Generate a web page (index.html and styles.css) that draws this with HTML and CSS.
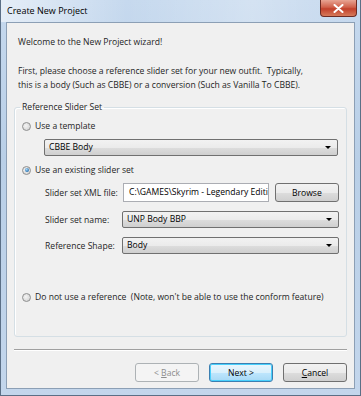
FILE: index.html
```html
<!DOCTYPE html>
<html lang="en">
<head>
  <meta charset="UTF-8" />
  <title>Create New Project</title>
  <link rel="stylesheet" href="styles.css">
</head>
<body>

  <div class="window">
    <div class="titlebar">
      <span class="title">Create New Project</span>
      <div class="close">
        <svg width="11" height="9" viewBox="0 0 11 9">
          <path d="M1.5 1 L9.5 8 M9.5 1 L1.5 8" stroke="#fff" stroke-width="2" stroke-linecap="round"/>
        </svg>
      </div>
    </div>

    <div class="client">
      <div class="intro">
        <p class="welcome">Welcome to the New Project wizard!</p>
        <p class="lead">First, please choose a reference slider set for your new outfit.&nbsp; Typically,<br>this is a body (Such as CBBE) or a conversion (Such as Vanilla To CBBE).</p>
      </div>

      <fieldset class="group">
        <legend>Reference Slider Set</legend>

        <label class="radio r1"><span class="dot"></span>Use a template</label>
        <div class="combo template">CBBE Body<span class="arrow"></span></div>

        <label class="radio r2"><span class="dot on"></span>Use an existing slider set</label>
        <div class="form">
          <span class="lbl">Slider set XML file:</span>
          <div class="file-row">
            <div class="field">C:\GAMES\Skyrim - Legendary Editi</div>
            <button class="btn browse">Browse</button>
          </div>
          <span class="lbl">Slider set name:</span>
          <div class="combo">UNP Body BBP<span class="arrow"></span></div>
          <span class="lbl">Reference Shape:</span>
          <div class="combo">Body<span class="arrow"></span></div>
        </div>

        <label class="radio r3"><span class="dot"></span>Do not use a reference&nbsp; (Note, won't be able to use the conform feature)</label>
      </fieldset>

      <div class="sep"></div>

      <div class="buttons">
        <button class="btn disabled">&lt; <u>B</u>ack</button>
        <button class="btn default">Next &gt;</button>
        <button class="btn"><u>C</u>ancel</button>
      </div>
    </div>
  </div>

</body>
</html>
```

FILE: styles.css
```css
html, body {
  margin: 0;
  padding: 0;
  background: #fff;
}
body {
  font-family: 'Segoe UI', 'Open Sans', sans-serif;
  font-size: 8.6px;
  color: #1e1e1e;
}
.window {
  width: 361px;
  height: 396px;
  box-sizing: border-box;
  padding: 0 5px 6px 5px;
  background: linear-gradient(180deg, #c6d9ee 0%, #b9cfe7 40%, #c3d6ec 100%);
  border: 1px solid #5b6f86;
  border-top: none;
  display: flex;
  flex-direction: column;
}
.titlebar {
  height: 22px;
  flex: none;
  display: flex;
  align-items: flex-start;
  justify-content: space-between;
  background: linear-gradient(90deg, rgba(255,255,255,0.55) 0%, rgba(255,255,255,0) 35%, rgba(255,255,255,0.25) 70%, rgba(255,255,255,0) 100%);
  margin: 0 -5px;
  padding: 0 3px 0 6px;
}
.title {
  line-height: 22px;
  color: #000;
  font-size: 9px;
}
.close {
  width: 37px;
  height: 17px;
  box-sizing: border-box;
  border: 1px solid #6d2b23;
  border-top: none;
  border-radius: 0 0 4px 4px;
  background: linear-gradient(180deg, #e8a493 0%, #d0614b 45%, #c2402b 55%, #d67a5a 100%);
  display: flex;
  align-items: center;
  justify-content: center;
}
.client {
  flex: 1;
  background: #f0f0f0;
  border: 1px solid #8c9fb5;
  padding: 0 7px;
}
p {
  margin: 0;
  line-height: 14px;
}
.intro {
  padding-left: 4px;
}
.welcome {
  margin-top: 12px;
}
.lead {
  margin-top: 15px;
}
.group {
  margin: 8px 0 0 0;
  padding: 0 0 32px 0;
  border: 1px solid #d5dfe5;
  border-radius: 3px;
  box-shadow: inset 1px 1px 0 #fff;
  min-width: 0;
}
.group legend {
  margin-left: 5px;
  padding: 0 2px;
  line-height: 14px;
}
.radio {
  display: flex;
  align-items: center;
  height: 14px;
  margin-left: 7px;
}
.r1 { margin-top: 5px; }
.r2 { margin-top: 7px; }
.r3 { margin-top: 36px; }
.dot {
  width: 9px;
  height: 9px;
  box-sizing: border-box;
  border-radius: 50%;
  border: 1px solid #8e8f8f;
  background: radial-gradient(circle at 40% 40%, #f4f4f4 0%, #d9d9d9 70%, #cfcfcf 100%);
  margin-right: 4px;
  position: relative;
}
.dot.on::after {
  content: "";
  position: absolute;
  left: 1.5px;
  top: 1.5px;
  width: 4px;
  height: 4px;
  border-radius: 50%;
  background: radial-gradient(circle at 40% 35%, #a9d7f7 0%, #2b76b5 70%, #1c5a94 100%);
}
.combo {
  height: 17px;
  box-sizing: border-box;
  border: 1px solid #707070;
  border-radius: 2px;
  background: linear-gradient(180deg, #f2f2f2 0%, #ebebeb 50%, #dddddd 51%, #cfcfcf 100%);
  padding-left: 4px;
  line-height: 15px;
  position: relative;
  color: #000;
}
.combo.template {
  margin: 6px 8px 0 29px;
}
.arrow {
  position: absolute;
  right: 6px;
  top: 6px;
  border-left: 3px solid transparent;
  border-right: 3px solid transparent;
  border-top: 3px solid #000;
}
.form {
  display: grid;
  grid-template-columns: 78px 1fr;
  align-items: center;
  row-gap: 9px;
  margin: 6px 8px 0 30px;
}
.form .combo {
  margin-left: -1px;
}
.lbl {
  white-space: nowrap;
}
.file-row {
  display: flex;
  gap: 6px;
}
.field {
  flex: 1;
  height: 19px;
  box-sizing: border-box;
  border: 1px solid #abadb3;
  background: #fff;
  padding-left: 5px;
  line-height: 17px;
  color: #000;
  white-space: nowrap;
  overflow: hidden;
}
.btn {
  font-family: inherit;
  font-size: 8.6px;
  color: #000;
  height: 19px;
  box-sizing: border-box;
  border: 1px solid #707070;
  border-radius: 3px;
  background: linear-gradient(180deg, #f2f2f2 0%, #ebebeb 50%, #dddddd 51%, #cfcfcf 100%);
  padding: 0;
}
.browse {
  width: 64px;
}
.sep {
  height: 1px;
  background: #a0a0a0;
  border-bottom: 1px solid #fff;
  margin-top: 12px;
}
.buttons {
  display: flex;
  justify-content: flex-end;
  gap: 10px;
  margin-top: 12px;
}
.buttons .btn {
  width: 64px;
}
.btn.disabled {
  color: #8d8d8d;
  border-color: #adb2b5;
  background: #f4f4f4;
}
.btn.default {
  border-color: #3c7fb1;
  background: linear-gradient(180deg, #eaf6fd 0%, #d9f0fc 50%, #bee6fd 51%, #a7d9f5 100%);
  box-shadow: inset 0 0 0 1px #48d0fc;
}
```
